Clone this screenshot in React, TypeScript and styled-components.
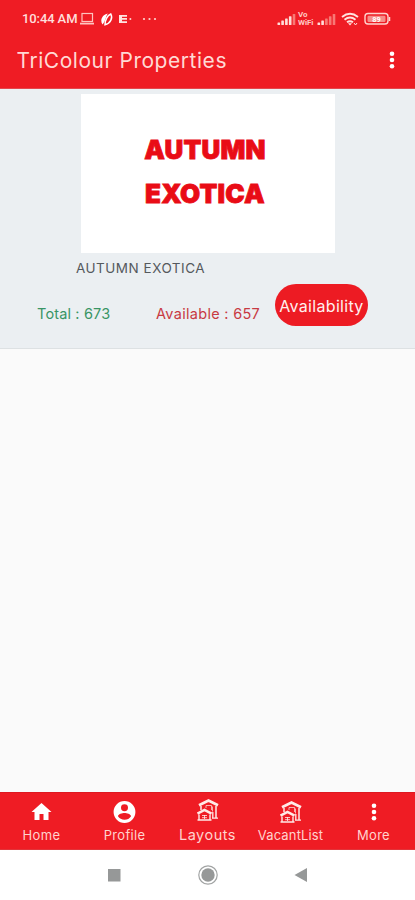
import React from 'react';
import styled, { createGlobalStyle } from 'styled-components';

const Global = createGlobalStyle`
  * { box-sizing: border-box; }
  body { margin: 0; background: #fafafa; font-family: Inter, "Open Sans", sans-serif; }
`;

const Screen = styled.div`
  width: 415px; height: 900px; display: flex; flex-direction: column; background: #fafafa; overflow: hidden;
`;
const Header = styled.header`
  height: 89px; flex: none; background: #ef1c24; border-bottom: 1px solid #e4474d;
`;
const StatusBar = styled.div`
  height: 37px; padding: 1px 24px 0 22px; display: flex; align-items: center; justify-content: space-between; color: #ffdfdc;
`;
const StatusGroup = styled.div`display: flex; align-items: center;`;
const Gap = styled.i<{ $w: number }>`width: ${p => p.$w}px; flex: none;`;
const Clock = styled.span`
  font: 500 13px/16px Roboto, sans-serif; letter-spacing: -0.1px; width: 57px; white-space: nowrap;
`;
const AppBar = styled.div`
  height: 46px; padding: 0 19px 0 16.5px; display: flex; align-items: center; justify-content: space-between; color: #ffd9d5;
  span { padding-top: 1px; }
`;
const Label = styled.span<{ $size: number; $spacing?: number; $color?: string }>`
  font-size: ${p => p.$size}px;
  letter-spacing: ${p => p.$spacing ?? 0}px;
  color: ${p => p.$color ?? 'inherit'};
  line-height: 20px;
  white-space: nowrap;
`;
const Card = styled.section`
  height: 260px; flex: none; background: #ebeff2; border-bottom: 1px solid #dde1e3; padding-top: 5px;
`;
const Poster = styled.div`
  width: 254px; height: 159px; margin-left: 81px; background: #fff; color: #e90c16;
  display: flex; flex-direction: column; align-items: center; padding: 34px 6px 0 0;
`;
const PosterWord = styled.span`
  font-size: 26px; line-height: 44px; font-weight: 900; letter-spacing: 0.2px; -webkit-text-stroke: 0.8px #e90c16;
`;
const NameRow = styled.div`height: 31px; padding: 5px 0 0 76px; display: flex;`;
const Figures = styled.div`
  height: 42px; display: grid; grid-template-columns: 119px 119px 93px; padding-left: 37px; align-items: center;
`;
const Figure = styled.div`padding-top: 17px; display: flex;`;
const Pill = styled.button`
  width: 93px; height: 42px; padding: 1px 0 0; border: 0; border-radius: 21px; background: #ed1b23; color: #fff0ef;
  font-family: inherit; display: flex; align-items: center; justify-content: center;
`;
const Body = styled.main`flex: 1;`;
const TabBar = styled.nav`
  height: 58px; flex: none; display: grid; grid-template-columns: repeat(5, 83px);
  background: #ef1c24; border-top: 1px solid #de1820; border-bottom: 1px solid #e2343a; color: #ffd3ce;
`;
const Tab = styled.div<{ $active?: boolean }>`
  display: flex; flex-direction: column; align-items: center; padding-top: ${p => (p.$active ? 5 : 7)}px;
  svg { height: 24px; flex: none; }
  span { margin-top: ${p => (p.$active ? 3 : 1)}px; }
`;
const SystemNav = styled.div`
  height: 50px; flex: none; background: #fff; display: flex; align-items: center; justify-content: center; gap: 73px; padding-left: 1px;
`;

const Laptop = () => (
  <svg width="16" height="14" viewBox="0 0 16 14" fill="none" stroke="#ffc3be">
    <rect x="3" y="1.5" width="10.5" height="8" strokeWidth="1.2" /><path d="M1 11.6h14" strokeWidth="1.8" />
  </svg>
);
const Leaf = () => (
  <svg width="14" height="15" viewBox="0 0 14 15">
    <path d="M2.500 12.500C-.5 8 2.500 2.500 7.800 1.500C5.500 5 5.500 9.500 2.500 12.500Z" fill="#fff" />
    <path d="M5 12.800C5 8.500 7 3.500 10.800 2C13 6 10.500 11.500 5 12.800Z" fill="none" stroke="#fff" strokeWidth="1.500" />
  </svg>
);
const EGlyph = () => (
  <svg width="16" height="14" viewBox="0 0 16 14">
    <path d="M1 3h8v1.700H4v1.300h5v1.700H4v1.500h5V11H1Z" fill="#ffe4e1" /><circle cx="12.400" cy="7" r="1" fill="#ffd3ce" />
  </svg>
);
const Ellipsis = () => (
  <svg width="16" height="14" viewBox="0 0 16 14" fill="#ffd3ce">
    <circle cx="2" cy="7" r="1.100" /><circle cx="7.500" cy="7" r="1.100" /><circle cx="13" cy="7" r="1.100" />
  </svg>
);
const Signal = ({ bars }: { bars: number }) => (
  <svg width="19" height="14" viewBox="0 0 19 14">
    {[2.5, 4.5, 6.5, 8.8, 11].map((h, i) => (
      <rect key={h} x={0.5 + i * 3.8} y={13 - h} width="2.600" height={h} rx=".6" fill={i < bars ? '#ffdeda' : '#f87975'} />
    ))}
  </svg>
);
const VoWifi = styled.div`
  width: 18px; margin: 0 1px 0 2px; display: flex; flex-direction: column;
  font: 700 8px/8.500px Roboto, sans-serif; color: #ffc8c3; letter-spacing: -0.1px;
`;
const Wifi = () => (
  <svg width="18" height="15" viewBox="0 0 18 15" fill="none" stroke="#ffe2df" strokeWidth="1.900">
    <path d="M1 5Q9-1.500 17 5M3.500 7.800Q9 3.300 14.500 7.800M6 10.300Q9 8 12 10.300" />
    <path d="M7 11.300h4L9 13.500Z" fill="#ffe2df" stroke="none" /><path d="m13 11 1.500 2 1.500-2" strokeWidth="1" />
  </svg>
);
const Battery = () => (
  <svg width="27" height="14" viewBox="0 0 27 14">
    <rect x="1" y="1.500" width="23" height="10.500" rx="3" fill="none" stroke="#ffd3ce" strokeWidth="1.400" />
    <rect x="3.500" y="3.700" width="18" height="6.200" rx="1.200" fill="#f68d8a" />
    <text x="12.500" y="9.600" textAnchor="middle" fontFamily="Roboto" fontWeight="700" fontSize="7.500" fill="#fff">89</text>
    <path d="M25.500 5v4" stroke="#ffd3ce" strokeWidth="1.500" />
  </svg>
);
const Dots = () => (
  <svg width="8" height="24" viewBox="0 0 8 24" fill="#fff">
    <circle cx="4" cy="5.700" r="2.300" /><circle cx="4" cy="12" r="2.300" /><circle cx="4" cy="18.300" r="2.300" />
  </svg>
);
const HomeIcon = () => (
  <svg width="25" viewBox="0 0 24 24" fill="#fff"><path d="M10 20v-6h4v6h5v-8h3L12 3 2 12h3v8z" /></svg>
);
const ProfileIcon = () => (
  <svg width="25" viewBox="1 1 22 22" fill="#fff">
    <path fillRule="evenodd" d="M12 2a10 10 0 1 0 0 20 10 10 0 0 0 0-20Zm0 3a3.200 3.200 0 1 1 0 6.400A3.200 3.200 0 0 1 12 5Zm0 14.200c-2.500 0-4.710-1.280-6-3.220.03-1.990 4-3.080 6-3.080s5.970 1.090 6 3.080a7.200 7.200 0 0 1-6 3.220Z" />
  </svg>
);
const HousesIcon = () => (
  <svg width="24" viewBox="0 0 24 24" fill="none" stroke="#ffeae7">
    <path d="m3 7.300 9.500-4.800L22 7.300" strokeWidth="2.700" />
    <path d="M5 8v4M20 8v12" strokeWidth="1.500" />
    <path d="M16.800 14v6M16 20.200h6" strokeWidth="1.300" />
    <path d="M10 10V7.500h5.500V12M16.500 8.500v5" strokeWidth="1" opacity=".7" />
    <path d="m1.500 15.700 7-3.800 7 3.800" strokeWidth="2.500" />
    <path d="M3 16.500V21.500M14 16.500V21.500M1.500 22h14" strokeWidth="1.400" />
    <path d="M6 17.500h5M6 19.700h5M8.500 17v4" strokeWidth="1" opacity=".8" />
  </svg>
);

export default function App() {
  return (
    <>
      <Global />
      <Screen>
        <Header>
          <StatusBar>
            <StatusGroup>
              <Clock>10:44 AM</Clock><Laptop /><Gap $w={5} /><Leaf /><Gap $w={4} /><EGlyph /><Gap $w={8} /><Ellipsis />
            </StatusGroup>
            <StatusGroup>
              <Signal bars={4} />
              <VoWifi><span>Vo</span><span>WiFi</span></VoWifi>
              <Signal bars={2} /><Gap $w={5} /><Wifi /><Gap $w={5} /><Battery />
            </StatusGroup>
          </StatusBar>
          <AppBar><Label $size={21} $spacing={0.54}>TriColour Properties</Label><Dots /></AppBar>
        </Header>
        <Card>
          <Poster><PosterWord>AUTUMN</PosterWord><PosterWord>EXOTICA</PosterWord></Poster>
          <NameRow><Label $size={13.5} $spacing={0.5} $color="#55595d">AUTUMN EXOTICA</Label></NameRow>
          <Figures>
            <Figure><Label $size={14.5} $spacing={0.15} $color="#399565">Total : 673</Label></Figure>
            <Figure><Label $size={14.5} $spacing={0.3} $color="#c83a43">Available : 657</Label></Figure>
            <Pill><Label $size={16} $spacing={0.32}>Availability</Label></Pill>
          </Figures>
        </Card>
        <Body />
        <TabBar>
          <Tab><HomeIcon /><Label $size={13} $spacing={0.45}>Home</Label></Tab>
          <Tab><ProfileIcon /><Label $size={13} $spacing={0.3}>Profile</Label></Tab>
          <Tab $active><HousesIcon /><Label $size={14.5} $spacing={0.5}>Layouts</Label></Tab>
          <Tab><HousesIcon /><Label $size={13} $spacing={0.15}>VacantList</Label></Tab>
          <Tab><Dots /><Label $size={13} $spacing={0.3}>More</Label></Tab>
        </TabBar>
        <SystemNav>
          <svg width="20" height="20"><rect x="4" y="4" width="12.500" height="12.500" fill="#969898" /></svg>
          <svg width="22" height="22"><circle cx="11" cy="11" r="9.200" fill="none" stroke="#a2a4a4" strokeWidth="1.200" /><circle cx="11" cy="11" r="6.700" fill="#969898" /></svg>
          <svg width="20" height="20"><path d="M2.500 10 15 3v14Z" fill="#969898" /></svg>
        </SystemNav>
      </Screen>
    </>
  );
}
